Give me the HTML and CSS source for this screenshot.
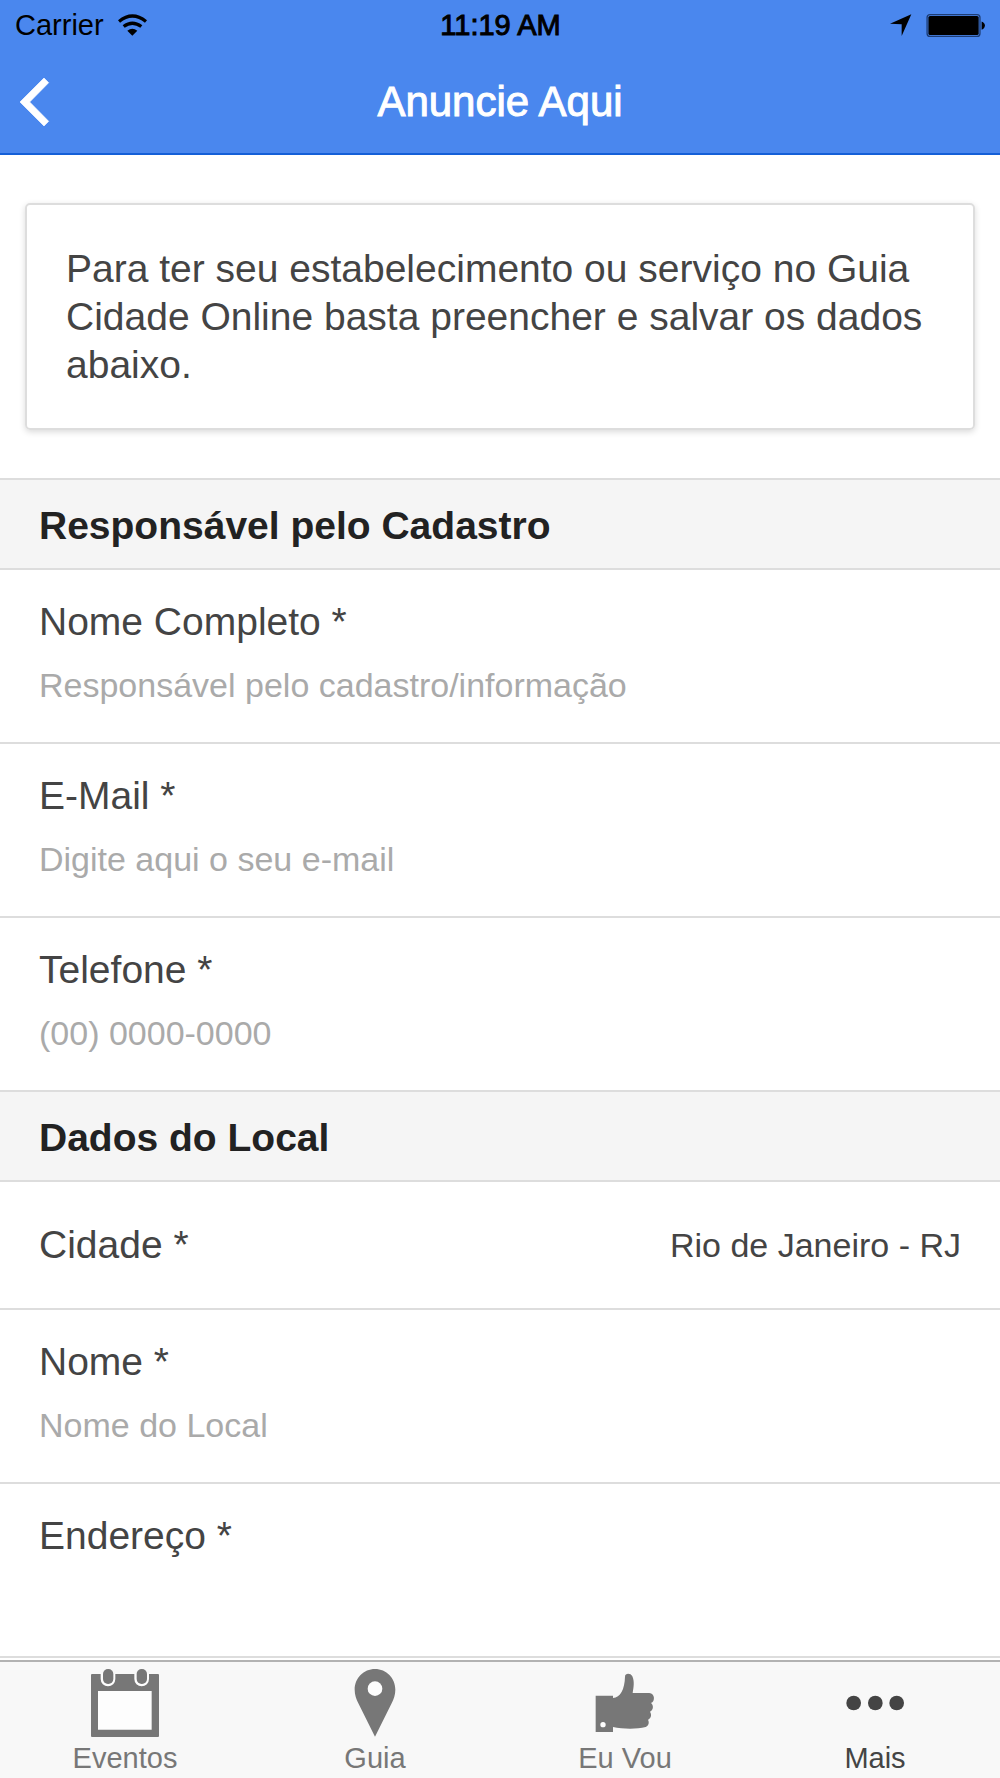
FILE: index.html
```html
<!DOCTYPE html>
<html lang="pt-BR">
  <head>
    <meta charset="UTF-8" />
    <meta name="viewport" content="width=device-width, initial-scale=1.0" />
    <title>Anuncie Aqui</title>
    <link rel="stylesheet" href="styles.css">
  </head>
  <body>
    <header class="header">
      <div class="status-bar">
        <div class="status-left">
          <span>Carrier</span>
          <svg class="icon-wifi" viewBox="357 39 87 65">
            <path d="M360 61 Q400 28 441 61 M374 76 Q400 56 427 76" fill="none" stroke="#000" stroke-width="10" />
            <path d="M385 89 Q400 76 415 89 L400 104 Z" />
          </svg>
        </div>
        <span class="status-time">11:19 AM</span>
        <div class="status-right">
          <svg class="icon-location" viewBox="95 42 66 66">
            <path d="M159 43 L130 108 V73 L95 71 Z" />
          </svg>
          <svg class="icon-battery" viewBox="201 39 180 70">
            <rect x="203" y="41" width="161" height="66" rx="9" fill="none" stroke="#1d3d75" stroke-width="4" />
            <rect x="207" y="45" width="153" height="58" rx="5" />
            <path d="M369 62 Q379 66 379 74 T369 87 Z" />
          </svg>
        </div>
      </div>
      <div class="nav-bar">
        <button class="btn-back" type="button" aria-label="Voltar">
          <svg viewBox="59 233 87 144">
            <path d="M131 233 L145 247 L88 305 L145 363 L131 377 L59 305 Z" fill="#fff" stroke="#fff" stroke-width="2" />
          </svg>
        </button>
        <h1>Anuncie Aqui</h1>
      </div>
    </header>

    <main class="content">
      <p class="card">
        Para ter seu estabelecimento ou serviço no Guia Cidade Online basta
        preencher e salvar os dados abaixo.
      </p>

      <form class="list">
        <h2 class="divider">Responsável pelo Cadastro</h2>
        <div class="item">
          <label for="responsavel">Nome Completo *</label>
          <input type="text" id="responsavel" placeholder="Responsável pelo cadastro/informação" required />
        </div>
        <div class="item">
          <label for="email">E-Mail *</label>
          <input type="email" id="email" placeholder="Digite aqui o seu e-mail" required />
        </div>
        <div class="item">
          <label for="telefone">Telefone *</label>
          <input type="tel" id="telefone" placeholder="(00) 0000-0000" required />
        </div>

        <h2 class="divider">Dados do Local</h2>
        <div class="item item-select">
          <label for="cidade">Cidade *</label>
          <select id="cidade" required>
            <option>Rio de Janeiro - RJ</option>
          </select>
        </div>
        <div class="item">
          <label for="nome">Nome *</label>
          <input type="text" id="nome" placeholder="Nome do Local" required />
        </div>
        <div class="item">
          <label for="endereco">Endereço *</label>
          <input type="text" id="endereco" required />
        </div>
      </form>
    </main>

    <nav class="tabs">
      <a class="tab" href="#eventos">
        <svg viewBox="93 87 204 204">
          <path d="M96 102 H294 Q297 102 297 105 V288 Q297 291 294 291 H96 Q93 291 93 288 V105 Q93 102 96 102 Z" />
          <path d="M114 153 H275 V269 H114 Z" fill="#fdfdfd" />
          <path d="M122 101 V117 A22 22 0 0 0 166 117 V101 Z M223 101 V117 A22 22 0 0 0 267 117 V101 Z" fill="#fdfdfd" />
          <rect x="129" y="87" width="31" height="45" rx="15" />
          <rect x="230" y="87" width="31" height="45" rx="15" />
        </svg>
        <span>Eventos</span>
      </a>
      <a class="tab" href="#guia">
        <svg viewBox="64 87 204 204">
          <path d="M166 87 C132 87 105 114 105 149 C105 165 110 178 116 190 L166 290 L216 190 C222 178 227 165 227 149 C227 114 200 87 166 87 Z" />
          <circle cx="166" cy="146" r="22" fill="#fdfdfd" />
        </svg>
        <span>Guia</span>
      </a>
      <a class="tab" href="#eu-vou">
        <svg viewBox="93 87 204 204">
          <path d="M107 167 H159 V174 C181 172 194 148 195 110 C195 99 212 99 217 109 C224 124 221 143 218 159 H268 C285 160 286 185 273 189 C282 197 280 211 270 215 C276 224 273 235 264 239 C269 248 265 258 257 261 C229 268 188 267 159 261 V276 H107 Z" />
          <circle cx="129" cy="254" r="8" fill="#fdfdfd" />
        </svg>
        <span>Eu Vou</span>
      </a>
      <a class="tab active" href="#mais">
        <svg viewBox="63 87 204 204">
          <circle cx="101" cy="189" r="22" />
          <circle cx="166" cy="189" r="22" />
          <circle cx="230" cy="189" r="22" />
        </svg>
        <span>Mais</span>
      </a>
    </nav>
  </body>
</html>
```

FILE: styles.css
```css
* {
  box-sizing: border-box;
}
body {
  margin: 0;
  height: 100vh;
  display: flex;
  flex-direction: column;
  font-family: "Liberation Sans", Arial, sans-serif;
  font-size: 39px;
  color: #444;
  background: #fff;
}
svg {
  display: block;
  fill: currentColor;
}

/* header */
.header {
  flex: none;
  background: #4a87ee;
  border-bottom: 2px solid #145fd7;
}
.status-bar {
  height: 50px;
  padding: 0 14px 0 15px;
  display: grid;
  grid-template-columns: 1fr auto 1fr;
  align-items: center;
  font-size: 29px;
  color: #000;
}
.status-left,
.status-right {
  display: flex;
  align-items: center;
  gap: 14px;
}
.status-right {
  justify-content: flex-end;
}
.status-time {
  -webkit-text-stroke: 1px #000;
}
.icon-wifi {
  width: 29px;
  height: 22px;
}
.icon-location {
  width: 22px;
  height: 22px;
}
.icon-battery {
  width: 60px;
  height: 23px;
}
.nav-bar {
  height: 103px;
  padding: 0 20px;
  display: grid;
  grid-template-columns: 1fr auto 1fr;
  align-items: center;
}
.btn-back {
  justify-self: start;
  padding: 0;
  border: none;
  background: none;
  cursor: pointer;
}
.btn-back svg {
  width: 29px;
  height: 48px;
  overflow: visible;
}
h1 {
  margin: 0;
  font-size: 42px;
  font-weight: normal;
  color: #fff;
  -webkit-text-stroke: 1px #fff;
}

/* content */
.content {
  flex: 1;
  min-height: 0;
  overflow: hidden;
}
.card {
  margin: 48px 25px;
  padding: 40px 39px 39px;
  border: 2px solid #ddd;
  border-radius: 5px;
  box-shadow: 0 2px 6px rgba(0, 0, 0, 0.15);
  line-height: 48px;
}
.list {
  border-top: 2px solid #ddd;
}
.divider {
  margin: 0;
  padding: 23px 39px 19px;
  border-bottom: 2px solid #ddd;
  background: #f5f5f5;
  font-size: 39px;
  line-height: 46px;
  color: #222;
}
.item {
  padding: 28px 39px 34px;
  border-bottom: 2px solid #ddd;
  display: flex;
  flex-direction: column;
  gap: 16px;
}
.item label {
  line-height: 48px;
}
.item input,
.item select {
  width: 100%;
  height: 46px;
  padding: 0;
  border: none;
  outline: none;
  background: none;
  font-family: inherit;
  font-size: 34px;
  color: #444;
}
.item input::placeholder {
  color: #aaa;
}
.item-select {
  flex-direction: row;
  align-items: center;
  padding: 39px;
}
.item-select label {
  flex: none;
}
.item-select select {
  flex: 1;
  appearance: none;
  text-align-last: right;
}

/* tabs */
.tabs {
  flex: none;
  display: flex;
  padding: 7px 0 3px;
  border-top: 2px solid #b2b2b2;
  background: #f8f8f8;
}
.tab {
  flex: 1;
  display: flex;
  flex-direction: column;
  align-items: center;
  gap: 4px;
  font-size: 29px;
  line-height: 34px;
  color: #777;
  text-decoration: none;
}
.tab.active {
  color: #444;
}
.tab svg {
  width: 68px;
  height: 68px;
}
```
